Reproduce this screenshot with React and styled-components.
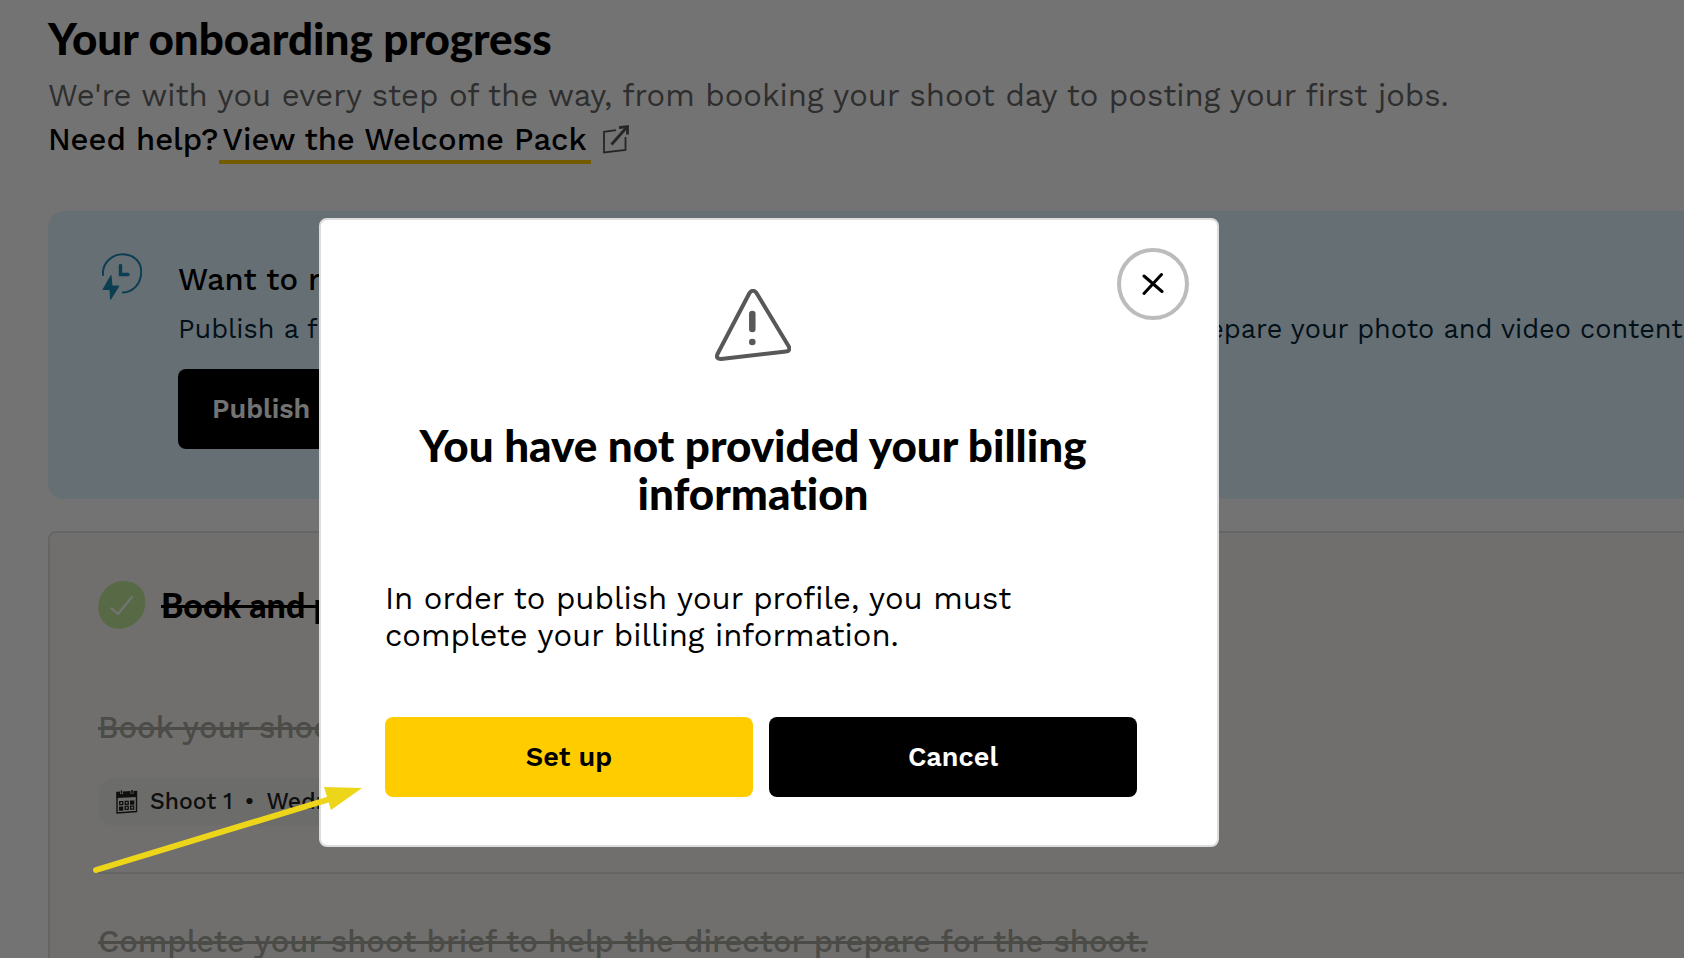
import styled, { createGlobalStyle, css } from "styled-components";

const GlobalStyle = createGlobalStyle`
  *, *::before, *::after {
    box-sizing: border-box;
  }

  html, body {
    height: 100%;
    overflow: hidden;
  }

  body {
    margin: 0;
    background: #fff;
    color: #000;
    font-family: "Work Sans", Inter, sans-serif;
    font-size: 31px;
    line-height: 44px;
  }

  #root {
    height: 100%;
  }

  h1, h2, h3, p, ul {
    margin: 0;
    padding: 0;
  }

  svg {
    flex: none;
  }
`;

const headingFont = css`
  font-family: Lato, sans-serif;
  font-weight: 900;
  font-variant-ligatures: none;
`;

const Page = styled.main`
  height: 100%;
  overflow: hidden;
  padding: 12px 0 0 48px;
`;

const PageTitle = styled.h1`
  ${headingFont}
  font-size: 44px;
  line-height: 52px;
`;

const Intro = styled.p`
  margin-top: 10px;
  color: #666;
  white-space: nowrap;
`;

const Help = styled.p`
  display: flex;
  align-items: flex-start;
  margin-top: 1px;
  font-weight: 500;
  line-height: 41px;
`;

const PackLink = styled.a`
  padding: 0 4px;
  border-bottom: 4px solid #ffcc00;
  color: inherit;
  text-decoration: none;
`;

const ExternalIcon = styled.svg`
  margin: 6px 0 0 12px;
`;

const Banner = styled.section`
  display: flex;
  align-items: flex-start;
  gap: 36px;
  margin: 47px -48px 0 0;
  padding: 42px 50px 50px 54px;
  border-radius: 16px;
  background: #e3f5ff;
`;

const BannerBody = styled.div`
  flex: none;
`;

const BannerTitle = styled.h2`
  margin-top: 5px;
  font-size: 31px;
  font-weight: 500;
  line-height: 44px;
`;

const BannerText = styled.p`
  margin: 7px 0 20px;
  color: #04263a;
  font-size: 27px;
  line-height: 40px;
  white-space: nowrap;
`;

const Button = styled.button`
  flex: ${({ $wide }) => ($wide ? "1" : "none")};
  height: 80px;
  padding: 0 34px;
  border: 0;
  border-radius: 8px;
  background: ${({ $primary }) => ($primary ? "#ffcc00" : "#000")};
  color: ${({ $primary }) => ($primary ? "#000" : "#fff")};
  font: 600 27px/40px "Work Sans", Inter, sans-serif;
  cursor: pointer;
`;

const Card = styled.section`
  margin: 32px -48px 0 0;
  border: 2px solid #e1e1e1;
  border-radius: 8px;
  background: #f9f7f2;
`;

const CardHeader = styled.header`
  display: flex;
  align-items: center;
  gap: 15px;
  padding: 48px 48px 0;
`;

const CardTitle = styled.h2`
  ${headingFont}
  font-size: 34px;
  line-height: 48px;
  text-decoration: line-through;
`;

const Steps = styled.ul`
  padding: 0 0 0 48px;
  list-style: none;
`;

const Step = styled.li`
  padding: ${({ $first }) => ($first ? "77px" : "46px")} 0 46px;
  border-bottom: 2px solid #e1e1e1;
`;

const StepTitle = styled.h3`
  color: #a6a69f;
  font-size: 31px;
  font-weight: 500;
  line-height: 44px;
  text-decoration: line-through;
  white-space: nowrap;
`;

const Chip = styled.div`
  display: inline-flex;
  align-items: center;
  gap: 12px;
  height: 48px;
  margin-top: 28px;
  padding: 0 18px;
  border-radius: 16px;
  background: #efefeb;
  color: #222;
  font-size: 23px;
  font-weight: 500;
  line-height: 32px;
  vertical-align: top;
`;

const Overlay = styled.div`
  position: fixed;
  inset: 0;
  display: flex;
  align-items: flex-start;
  justify-content: center;
  padding: 218px 146px 0 0;
  background: rgba(0, 0, 0, 0.55);
`;

const Modal = styled.div`
  position: relative;
  display: flex;
  flex-direction: column;
  width: 900px;
  padding: 69px 80px 48px 64px;
  border: 2px solid #ddd;
  border-radius: 8px;
  background: #fff;
`;

const CloseButton = styled.button`
  position: absolute;
  top: 28px;
  right: 28px;
  display: grid;
  place-items: center;
  width: 72px;
  height: 72px;
  padding: 0;
  border: 4px solid #bcbcbc;
  border-radius: 50%;
  background: #fff;
  cursor: pointer;
`;

const ModalHeader = styled.header`
  display: flex;
  flex-direction: column;
  align-items: center;
  gap: 60px;
  padding-right: 16px;
`;

const ModalTitle = styled.h2`
  ${headingFont}
  font-size: 44px;
  line-height: 48px;
  text-align: center;
`;

const ModalText = styled.p`
  max-width: 680px;
  margin-top: 63px;
  line-height: 37px;
`;

const ModalActions = styled.div`
  display: flex;
  gap: 16px;
  margin-top: 63px;
`;

const Pointer = styled.svg`
  position: fixed;
  top: 780px;
  left: 88px;
  pointer-events: none;
`;

const steps = [
  {
    id: 1,
    title: "Book your shoot day",
    shoot: { name: "Shoot 1", date: "Wednesday" },
  },
  {
    id: 2,
    title: "Complete your shoot brief to help the director prepare for the shoot.",
  },
];

const CalendarIcon = () => (
  <svg width="22" height="24" viewBox="0 0 22 24" aria-hidden="true">
    <path d="M1 2.5 20.5 1.5V21.5L1 23Z" fill="none" stroke="#222" strokeWidth="1.4" />
    <path d="M0.5 2.5 21 1.5V7L0.5 8Z" fill="#222" />
    <path d="M5.5 1v3M16 0.5v3" stroke="#efefeb" strokeWidth="3" />
    <path d="M5.5 0.5v3M16 0v3" stroke="#222" strokeWidth="1.6" />
    <path
      d="M3.7 11.7h3v3h-3zM9.2 11.4h3v3h-3zM9.2 16.4h3v3h-3zM14.6 16.1h3v3h-3z"
      fill="none"
      stroke="#222"
      strokeWidth="1.3"
    />
    <path d="M14 10.5h4.3v4.2H14zM3 16.5h4.3v4.2H3z" fill="#222" />
  </svg>
);

const App = () => {
  return (
    <>
      <GlobalStyle />
      <Page>
        <PageTitle>Your onboarding progress</PageTitle>
        <Intro>
          We're with you every step of the way, from booking your shoot day to
          posting your first jobs.
        </Intro>
        <Help>
          Need help?
          <PackLink href="#welcome-pack">View the Welcome Pack</PackLink>
          <ExternalIcon width="26" height="29" viewBox="0 0 26 29" fill="none" stroke="#555" aria-hidden="true">
            <path d="M13 5.2 1 6.8V27.5L22.5 25V12" strokeWidth="1.8" />
            <path d="M8.5 19.5 24 2" strokeWidth="2.8" />
            <path d="M16 2.6 24.5 1.6V9.5" strokeWidth="2.8" />
          </ExternalIcon>
        </Help>

        <Banner>
          <svg width="40" height="48" viewBox="0 0 40 48" fill="none" aria-hidden="true">
            <path
              d="M1 22C0 9 11 1 21 1.2 32 1.5 39.5 9 39.2 19 39 31 31 39 21 39.6"
              stroke="#1a89b6"
              strokeWidth="2"
              strokeLinecap="round"
            />
            <path d="M18.5 12.5V21.5H26" stroke="#1a89b6" strokeWidth="3.4" strokeLinecap="round" />
            <path
              d="M9 22.5 1 36.5H8L8.5 46.5 17 33H10Z"
              fill="#1a89b6"
              stroke="#1a89b6"
              strokeLinejoin="round"
            />
          </svg>
          <BannerBody>
            <BannerTitle>Want to reach candidates sooner?</BannerTitle>
            <BannerText>
              Publish a first version of your company profile now while our
              team and you prepare your photo and video content.
            </BannerText>
            <Button>Publish profile</Button>
          </BannerBody>
        </Banner>

        <Card>
          <CardHeader>
            <svg width="48" height="48" viewBox="0 0 48 48" fill="none" aria-hidden="true">
              <path d="M25 0C39 0 48 9 47.5 22 47 36 35 48 21 47.8 8 47.5 0 38 0.3 25 1 11 12 0 25 0Z" fill="#c3eb99" />
              <path
                d="M13.5 27.5 20 33 34 16"
                stroke="#fff"
                strokeWidth="2.2"
                strokeLinecap="round"
                strokeLinejoin="round"
              />
            </svg>
            <CardTitle>Book and prepare</CardTitle>
          </CardHeader>
          <Steps>
            {steps.map(({ id, title, shoot }) => (
              <Step key={id} $first={id === 1}>
                <StepTitle>{title}</StepTitle>
                {shoot && (
                  <Chip>
                    <CalendarIcon />
                    <span>{shoot.name}</span>
                    <span>•</span>
                    <span>{shoot.date}</span>
                  </Chip>
                )}
              </Step>
            ))}
          </Steps>
        </Card>
      </Page>

      <Overlay>
        <Modal role="dialog" aria-modal="true" aria-labelledby="billing-title">
          <CloseButton aria-label="Close">
            <svg
              width="22"
              height="24"
              viewBox="0 0 22 24"
              fill="none"
              stroke="#000"
              strokeWidth="3"
              strokeLinecap="round"
              aria-hidden="true"
            >
              <path d="M2 4 20 19.5M19.5 2.5 2 21.5" />
            </svg>
          </CloseButton>
          <ModalHeader>
            <svg width="76" height="72" viewBox="0 0 76 72" fill="none" stroke="#585858" aria-hidden="true">
              <path
                d="M34.5 4Q38 -0.5 41.5 4L73.5 57Q76 62 71 62.5L6 70Q0.5 70 2.5 65Z"
                strokeWidth="4"
                strokeLinejoin="round"
              />
              <path d="M37.3 25V40" strokeWidth="6.5" strokeLinecap="round" />
              <circle cx="37.3" cy="53" r="3.3" fill="#585858" stroke="none" />
            </svg>
            <ModalTitle id="billing-title">
              You have not provided your billing information
            </ModalTitle>
          </ModalHeader>
          <ModalText>
            In order to publish your profile, you must complete your billing
            information.
          </ModalText>
          <ModalActions>
            <Button $wide $primary>
              Set up
            </Button>
            <Button $wide>Cancel</Button>
          </ModalActions>
        </Modal>
      </Overlay>

      <Pointer width="280" height="100" viewBox="0 0 280 100" aria-hidden="true">
        <path d="M8 90 242 19" stroke="#edd51a" strokeWidth="6" strokeLinecap="round" />
        <path d="M236 7 274 8 243 30Z" fill="#edd51a" />
      </Pointer>
    </>
  );
};

export default App;
